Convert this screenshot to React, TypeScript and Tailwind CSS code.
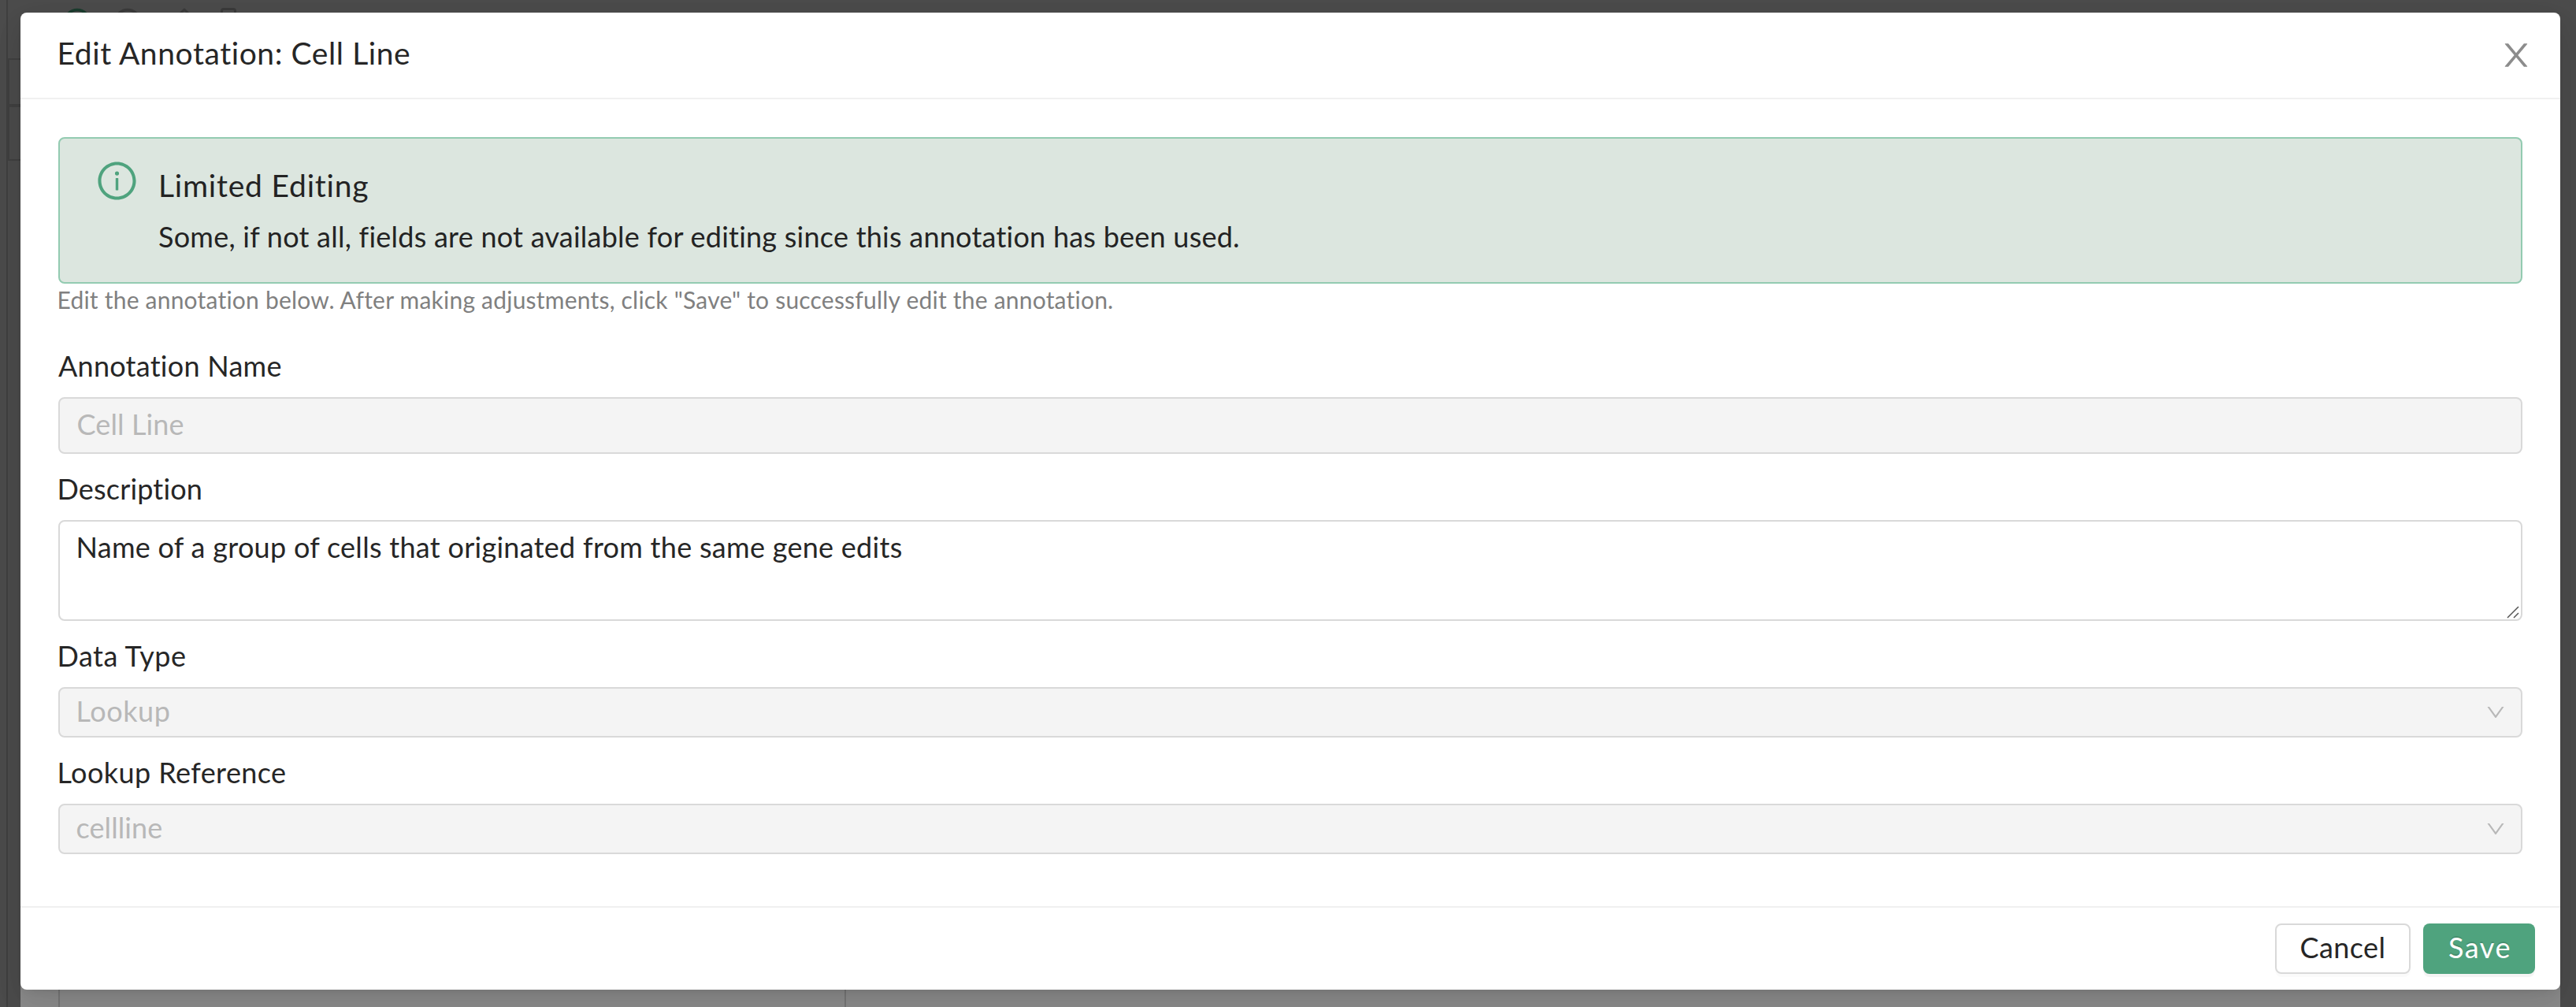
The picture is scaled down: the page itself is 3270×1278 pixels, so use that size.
import React from "react";

function DownIcon() {
  return (
    <svg viewBox="0 0 1024 1024" className="size-7 shrink-0 fill-[#b8b8b8]">
      <path d="M884 256h-75c-5.1 0-9.9 2.5-12.9 6.6L512 654.2 227.9 262.6c-3-4.1-7.8-6.6-12.9-6.6h-75c-6.5 0-10.3 7.4-6.5 12.7l352.6 486.1c12.8 17.6 39 17.6 51.7 0l352.6-486.1c3.9-5.3.1-12.7-6.4-12.7z" />
    </svg>
  );
}

function Label({ children, className }: { children: React.ReactNode; className: string }) {
  return (
    <div className={`mb-3 h-14 text-[36px] leading-[56px] whitespace-nowrap text-[#262626] ${className}`}>
      <span>{children}</span>
    </div>
  );
}

function Select({ value, className }: { value: string; className: string }) {
  return (
    <div className="flex h-16 items-center justify-between rounded-lg border-2 border-[#d9d9d9] bg-[#f4f4f4] pr-[18px] pl-[20.5px]">
      <span className={`pb-1 text-[36px] leading-[56px] text-[#b8b8b8] ${className}`}>{value}</span>
      <DownIcon />
    </div>
  );
}

/* Dimmed page that stays visible round the dialog */
function Backdrop() {
  return (
    <div className="absolute inset-0 bg-[#4c4c4c]">
      <svg width="3270" height="1278" viewBox="0 0 3270 1278" fill="none">
        <path d="M9 0V1278" stroke="#404040" strokeWidth="2" />
        <path d="M10 75H30M11 75V203M10 203H30" stroke="#404040" strokeWidth="2" />
        <path d="M10 134H30" stroke="#404040" strokeWidth="4" />
        <circle cx="98" cy="28" r="15.5" stroke="#1b3d2e" strokeWidth="3.5" />
        <circle cx="162" cy="28" r="15.5" stroke="#3b3b3b" strokeWidth="3.5" />
        <path d="M226 20l8-8 8 8" stroke="#3b3b3b" strokeWidth="3" strokeLinejoin="round" />
        <path d="M281.5 20v-6q0-2.500 2.500-2.500h12q2.500 0 2.500 2.500v6" stroke="#3b3b3b" strokeWidth="3" />
        <rect x="26" y="1240" width="3224" height="38" fill="#8c8c8c" />
        <path d="M75 1240V1278M1073 1240V1278" stroke="#777" strokeWidth="2" />
      </svg>
    </div>
  );
}

export default function App() {
  return (
    <div className="relative h-[1278px] w-[3270px] overflow-hidden px-[26px] pt-4 font-['Lato',sans-serif]">
      <Backdrop />
      <div className="relative flex h-[1240px] w-[3224px] flex-col rounded-lg bg-white shadow-[0_6px_12px_-8px_rgba(0,0,0,0.12),0_12px_32px_0_rgba(0,0,0,0.08),0_18px_56px_16px_rgba(0,0,0,0.05)]">
        <header className="flex h-[110px] items-start justify-between border-b-2 border-[#f0f0f0] pr-[33px] pl-[46.5px]">
          <h1 className="pt-[23px] text-[39px] leading-[56px] tracking-[0.58px] whitespace-nowrap text-[#262626]">
            <span>Edit Annotation: Cell Line</span>
          </h1>
          <svg viewBox="0 0 1024 1024" className="mt-[31px] size-[46px] fill-[#8c8c8c]">
            <path d="M563.8 512l262.5-312.9c4.4-5.2.7-13.1-6.1-13.1h-79.8c-4.7 0-9.2 2.1-12.3 5.7L511.6 449.8 295.1 191.7c-3-3.6-7.5-5.7-12.3-5.7H203c-6.8 0-10.5 7.9-6.1 13.1L459.4 512 196.9 824.9A7.95 7.95 0 0 0 203 838h79.8c4.7 0 9.2-2.1 12.3-5.7l216.5-258.1 216.5 258.1c3 3.6 7.5 5.7 12.3 5.7h79.8c6.8 0 10.5-7.9 6.1-13.1L563.8 512z" />
          </svg>
        </header>
        <main className="h-[1024px] px-12 pt-12">
          <div className="flex h-[186px] gap-[25px] rounded-lg border-2 border-[#93cbb1] bg-[#dce6df] pl-[45px]">
            <svg viewBox="0 0 1024 1024" className="mt-[26px] size-[55px] shrink-0 fill-[#4fa37e]">
              <path d="M512 64C264.6 64 64 264.6 64 512s200.6 448 448 448 448-200.6 448-448S759.4 64 512 64zm0 820c-205.4 0-372-166.6-372-372s166.6-372 372-372 372 166.6 372 372-166.6 372-372 372z" />
              <path d="M464 336a48 48 0 1 0 96 0 48 48 0 1 0-96 0zm72 112h-48c-4.4 0-8 3.6-8 8v272c0 4.4 3.6 8 8 8h48c4.4 0 8-3.6 8-8V456c0-4.4-3.6-8-8-8z" />
            </svg>
            <div className="pt-[31px] whitespace-nowrap text-[#232323]">
              <div className="h-[65px] text-[39px] leading-[56px] tracking-[0.8px]">
                <span>Limited Editing</span>
              </div>
              <div className="text-[36px] leading-[56px] tracking-[0.24px]">
                <span>Some, if not all, fields are not available for editing since this annotation has been used.</span>
              </div>
            </div>
          </div>
          <p className="-ml-[1.5px] h-[76px] text-[30px] leading-[40px] tracking-[0.215px] whitespace-nowrap text-[#808080]">
            <span>Edit the annotation below. After making adjustments, click "Save" to successfully edit the annotation.</span>
          </p>
          <Label className="tracking-[0.26px]">Annotation Name</Label>
          <div className="flex h-[72px] items-center rounded-lg border-2 border-[#d9d9d9] bg-[#f4f4f4] px-[21.5px]">
            <span className="pb-1 text-[36px] leading-[56px] tracking-[0.1px] text-[#b8b8b8]">Cell Line</span>
          </div>
          <Label className="mt-4 -ml-[1.5px] tracking-[0.18px]">Description</Label>
          <div className="relative h-32 rounded-lg border-2 border-[#d9d9d9] px-[20.5px] pt-1">
            <span className="text-[36px] leading-[56px] tracking-[0.28px] text-[#262626]">
              Name of a group of cells that originated from the same gene edits
            </span>
            <svg width="16" height="16" viewBox="0 0 16 16" className="absolute right-0.5 bottom-px" stroke="#555" strokeWidth="1.5">
              <path d="M1 15L15 1M9 15l6-6" />
            </svg>
          </div>
          <Label className="mt-4 -ml-[1.5px] tracking-[0.5px]">Data Type</Label>
          <Select value="Lookup" className="tracking-[0.56px]" />
          <Label className="mt-4 -ml-[1.5px] tracking-[0.42px]">Lookup Reference</Label>
          <Select value="cellline" className="tracking-[0.1px]" />
        </main>
        <footer className="flex h-[106px] justify-end gap-4 border-t-2 border-[#f0f0f0] pt-5 pr-8">
          <button className="h-16 w-[172px] rounded-lg border-2 border-[#d9d9d9] pb-1 text-[36px] leading-[56px] tracking-[0.4px] text-[#262626] shadow-[0_4px_0_rgba(0,0,0,0.016)]">
            <span>Cancel</span>
          </button>
          <button className="h-16 w-[142px] rounded-lg bg-[#4fa37e] pb-1 pl-0.5 text-[36px] leading-[56px] tracking-[1.5px] text-white shadow-[0_4px_0_rgba(0,0,0,0.045)] [text-shadow:0_-2px_0_rgba(0,0,0,0.12)]">
            <span>Save</span>
          </button>
        </footer>
      </div>
    </div>
  );
}
